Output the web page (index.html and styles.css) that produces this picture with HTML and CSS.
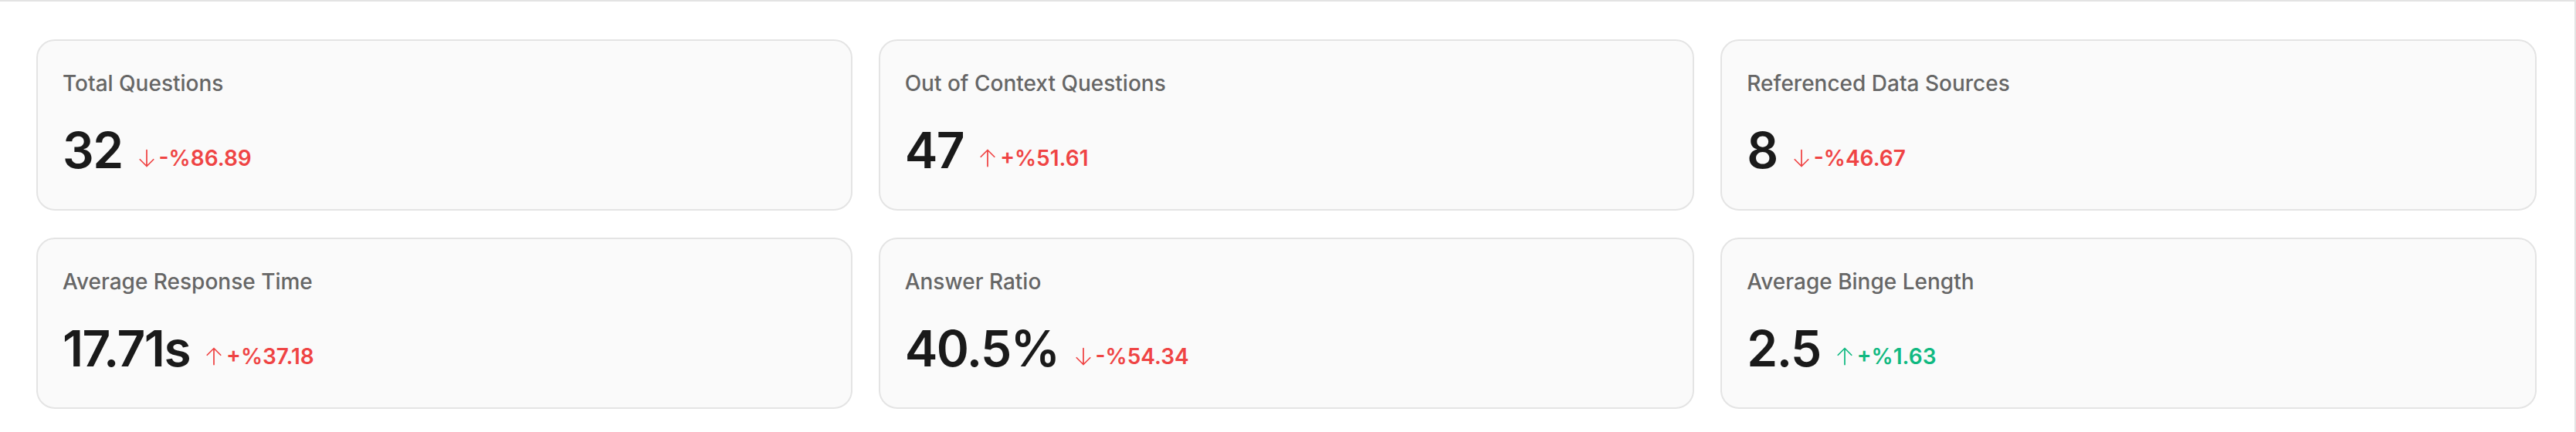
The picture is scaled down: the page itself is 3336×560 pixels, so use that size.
FILE: index.html
```html
<!DOCTYPE html>
<html lang="en">
<head>
<meta charset="utf-8">
<title>Stats</title>
<link rel="stylesheet" href="styles.css">
</head>
<body>
<div class="frame">
  <div class="grid">
    <div class="card">
      <div class="label">Total Questions</div>
      <div class="row">
        <div class="value">32</div>
        <div class="delta bad">
          <svg class="arrow" viewBox="0 0 24 24" fill="none" stroke="currentColor" stroke-width="1.5" stroke-linecap="round" stroke-linejoin="round"><path d="M19.5 13.5 12 21m0 0-7.5-7.5M12 21V3"/></svg>
          <span>-%86.89</span>
        </div>
      </div>
    </div>
    <div class="card">
      <div class="label">Out of Context Questions</div>
      <div class="row">
        <div class="value">47</div>
        <div class="delta bad">
          <svg class="arrow" viewBox="0 0 24 24" fill="none" stroke="currentColor" stroke-width="1.5" stroke-linecap="round" stroke-linejoin="round"><path d="M4.5 10.5 12 3m0 0 7.5 7.5M12 3v18"/></svg>
          <span>+%51.61</span>
        </div>
      </div>
    </div>
    <div class="card">
      <div class="label">Referenced Data Sources</div>
      <div class="row">
        <div class="value">8</div>
        <div class="delta bad">
          <svg class="arrow" viewBox="0 0 24 24" fill="none" stroke="currentColor" stroke-width="1.5" stroke-linecap="round" stroke-linejoin="round"><path d="M19.5 13.5 12 21m0 0-7.5-7.5M12 21V3"/></svg>
          <span>-%46.67</span>
        </div>
      </div>
    </div>
    <div class="card">
      <div class="label">Average Response Time</div>
      <div class="row">
        <div class="value">17.71s</div>
        <div class="delta bad">
          <svg class="arrow" viewBox="0 0 24 24" fill="none" stroke="currentColor" stroke-width="1.5" stroke-linecap="round" stroke-linejoin="round"><path d="M4.5 10.5 12 3m0 0 7.5 7.5M12 3v18"/></svg>
          <span>+%37.18</span>
        </div>
      </div>
    </div>
    <div class="card">
      <div class="label">Answer Ratio</div>
      <div class="row">
        <div class="value">40.5%</div>
        <div class="delta bad">
          <svg class="arrow" viewBox="0 0 24 24" fill="none" stroke="currentColor" stroke-width="1.5" stroke-linecap="round" stroke-linejoin="round"><path d="M19.5 13.5 12 21m0 0-7.5-7.5M12 21V3"/></svg>
          <span>-%54.34</span>
        </div>
      </div>
    </div>
    <div class="card">
      <div class="label">Average Binge Length</div>
      <div class="row">
        <div class="value">2.5</div>
        <div class="delta good">
          <svg class="arrow" viewBox="0 0 24 24" fill="none" stroke="currentColor" stroke-width="1.5" stroke-linecap="round" stroke-linejoin="round"><path d="M4.5 10.5 12 3m0 0 7.5 7.5M12 3v18"/></svg>
          <span>+%1.63</span>
        </div>
      </div>
    </div>
  </div>
</div>
</body>
</html>
```

FILE: styles.css
```css
* { box-sizing: border-box; }
html, body {
  margin: 0;
  padding: 0;
  background: #ffffff;
}
body {
  font-family: Inter, "Noto Sans", "Liberation Sans", sans-serif;
}
.frame {
  width: 3336px;
  height: 560px;
  border-top: 2px solid #e3e3e3;
  border-right: 2px solid #e3e3e3;
  padding: 49px 49px 0 47px;
  overflow: hidden;
}
.grid {
  display: grid;
  grid-template-columns: repeat(3, 1fr);
  column-gap: 34px;
  row-gap: 35px;
}
.card {
  background: #fafafa;
  border: 2px solid #e4e4e4;
  border-radius: 24px;
  padding: 35px 32px 44px 32px;
  display: flex;
  flex-direction: column;
  gap: 35px;
}
.label {
  font-size: 28px;
  line-height: 40px;
  font-weight: 500;
  color: #666666;
}
.row {
  display: flex;
  align-items: flex-end;
  gap: 17px;
}
.value {
  font-size: 64px;
  line-height: 64px;
  font-weight: 600;
  color: #1a1a1a;
  letter-spacing: -1.5px;
}
.delta {
  display: flex;
  align-items: center;
  gap: 2px;
  font-size: 28px;
  line-height: 40px;
  font-weight: 600;
  padding-bottom: 2px;
}
.delta.bad { color: #ef4444; }
.delta.good { color: #10b981; }
.arrow {
  width: 28px;
  height: 28px;
  flex: none;
}
```
